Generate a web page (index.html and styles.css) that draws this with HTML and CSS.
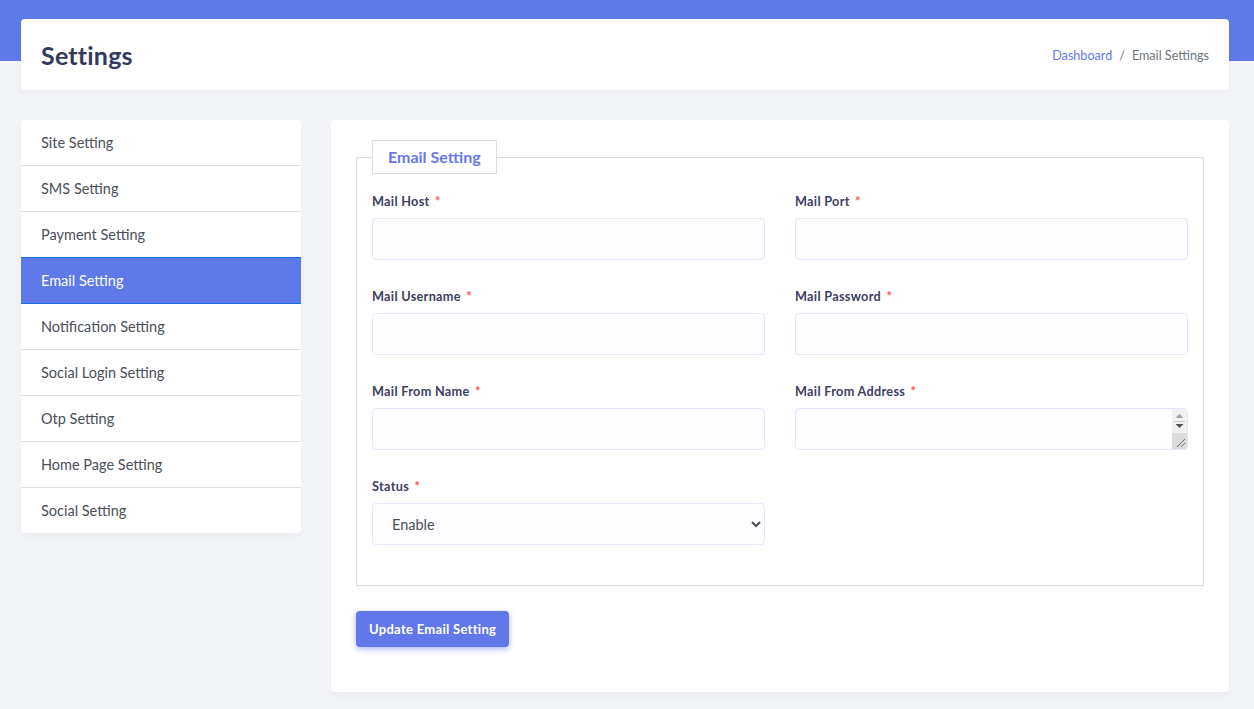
FILE: index.html
```html
<!DOCTYPE html>
<html lang="en">
<head>
<meta charset="utf-8">
<title>Settings</title>
<link rel="stylesheet" href="styles.css">
</head>
<body>
<div class="band"></div>
<div class="page">
  <header class="section-header">
    <h1>Settings</h1>
    <nav class="breadcrumb">
      <a href="#">Dashboard</a>
      <span class="sep">/</span>
      <span class="current">Email Settings</span>
    </nav>
  </header>

  <div class="content">
    <ul class="side-menu">
      <li>Site Setting</li>
      <li>SMS Setting</li>
      <li>Payment Setting</li>
      <li class="active">Email Setting</li>
      <li>Notification Setting</li>
      <li>Social Login Setting</li>
      <li>Otp Setting</li>
      <li>Home Page Setting</li>
      <li>Social Setting</li>
    </ul>

    <div class="main-card">
      <form>
        <fieldset class="box">
          <legend>Email Setting</legend>
          <div class="grid">
            <div class="group">
              <label>Mail Host <span class="req">*</span></label>
              <input type="text" class="control">
            </div>
            <div class="group">
              <label>Mail Port <span class="req">*</span></label>
              <input type="text" class="control">
            </div>
            <div class="group">
              <label>Mail Username <span class="req">*</span></label>
              <input type="text" class="control">
            </div>
            <div class="group">
              <label>Mail Password <span class="req">*</span></label>
              <input type="password" class="control">
            </div>
            <div class="group">
              <label>Mail From Name <span class="req">*</span></label>
              <input type="text" class="control">
            </div>
            <div class="group">
              <label>Mail From Address <span class="req">*</span></label>
              <div class="area-wrap">
                <textarea class="control area"></textarea>
                <div class="fake-scroll" aria-hidden="true">
                  <svg class="sb-btns" width="15" height="24" viewBox="0 0 15 24">
                    <path d="M3.5 9 L7.5 5 L11.5 9 Z" fill="#a3a3a3"/>
                    <rect x="2" y="12" width="11" height="1" fill="#c8c8c8"/>
                    <path d="M3.5 15 L11.5 15 L7.5 19 Z" fill="#505050"/>
                  </svg>
                  <div class="sb-corner">
                    <svg width="15" height="16" viewBox="0 0 15 16">
                      <path d="M5 14 L13 6 M9 14 L13 10" stroke="#707070" stroke-width="1"/>
                    </svg>
                  </div>
                </div>
              </div>
            </div>
            <div class="group">
              <label>Status <span class="req">*</span></label>
              <select class="control select">
                <option>Enable</option>
                <option>Disable</option>
              </select>
            </div>
          </div>
        </fieldset>
        <button type="button" class="btn">Update Email Setting</button>
      </form>
    </div>
  </div>
</div>
</body>
</html>
```

FILE: styles.css
```css
* { box-sizing: border-box; }

html, body {
  margin: 0;
  padding: 0;
}

body {
  background: #f3f4f8;
  font-family: "Lato", "Nunito", "Open Sans", sans-serif;
  color: #34395e;
  min-height: 709px;
  position: relative;
}

.band {
  position: absolute;
  left: 0;
  top: 0;
  right: 0;
  height: 61px;
  background: #5e7ae9;
  z-index: 0;
}

.page {
  position: relative;
  z-index: 1;
  padding: 19px 25px 17px 21px;
}

.section-header {
  background: #fff;
  border-radius: 4px;
  height: 71px;
  display: flex;
  align-items: center;
  justify-content: space-between;
  padding: 0 20px;
  box-shadow: 0 4px 8px rgba(0, 0, 0, 0.03);
}

.section-header h1 {
  margin: 0;
  font-size: 25px;
  font-weight: 700;
  color: #34395e;
  letter-spacing: 0.2px;
}

.breadcrumb {
  font-size: 12.6px;
  color: #6c757d;
  display: flex;
  gap: 7px;
  padding-top: 2px;
}

.breadcrumb a {
  color: #6777ef;
  text-decoration: none;
}

.content {
  display: flex;
  align-items: flex-start;
  gap: 30px;
  margin-top: 30px;
}

.side-menu {
  list-style: none;
  margin: 0;
  padding: 0;
  width: 280px;
  flex: none;
  background: #fff;
  border-radius: 4px;
  overflow: hidden;
  box-shadow: 0 4px 8px rgba(0, 0, 0, 0.03);
}

.side-menu li {
  height: 46px;
  display: flex;
  align-items: center;
  padding: 0 20px;
  font-size: 14.5px;
  color: #4a4f5a;
  border-top: 1px solid #dee2e6;
}

.side-menu li:first-child {
  border-top: none;
  height: 45px;
}

.side-menu li.active {
  background: #5e7ae9;
  color: #fff;
  border-top: 1px solid #1d6fe0;
  border-bottom: 1px solid #1d6fe0;
  height: 47px;
}

.side-menu li.active + li {
  border-top: none;
  height: 45px;
}

.main-card {
  flex: 1;
  background: #fff;
  border-radius: 4px;
  padding: 20px 25px 45px 25px;
  box-shadow: 0 4px 8px rgba(0, 0, 0, 0.03);
}

form { margin: 0; }

.box {
  margin: 0;
  border: 1px solid #dcdde1;
  padding: 0 15px 14px 15px;
  min-width: 0;
}

.box legend {
  margin-left: 0;
  padding: 7px 15px;
  border: 1px solid #dcdde1;
  font-size: 16px;
  font-weight: 700;
  color: #6777ef;
  line-height: 18px;
}

.grid {
  display: grid;
  grid-template-columns: 1fr 1fr;
  column-gap: 30px;
  padding-top: 17px;
}

.group {
  margin-bottom: 26px;
}

.group label {
  display: block;
  font-size: 12.7px;
  font-weight: 700;
  color: #3b405f;
  line-height: 18px;
  margin-bottom: 8px;
  padding-top: 1px;
  letter-spacing: 0.3px;
}

.req {
  color: #fc544b;
  margin-left: 2px;
}

.control {
  display: block;
  width: 100%;
  height: 42px;
  border: 1px solid #e4e6fc;
  background: #fdfdff;
  border-radius: 4px;
  font-family: inherit;
  font-size: 14px;
  color: #495057;
  padding: 10px 15px;
  margin: 0;
}

.area-wrap {
  position: relative;
}

.area {
  resize: none;
  padding: 0 15px;
}

.fake-scroll {
  position: absolute;
  top: 1px;
  right: 1px;
  bottom: 1px;
  width: 15px;
  background: #f1f1f1;
  display: flex;
  flex-direction: column;
  justify-content: space-between;
  border-radius: 0 3px 3px 0;
  overflow: hidden;
}

.sb-btns {
  display: block;
}

.sb-corner {
  height: 16px;
  background: #dcdcdc;
}

.sb-corner svg {
  display: block;
}

.select {
  padding: 0 15px;
  font-size: 14.5px;
}

.btn {
  margin-top: 25px;
  height: 36px;
  padding: 0 13px;
  border: none;
  border-radius: 4px;
  background: #6178ea;
  color: #fff;
  font-family: inherit;
  font-size: 13px;
  font-weight: 700;
  letter-spacing: 0.3px;
  box-shadow: 0 2px 6px #acb5f6;
}
```
